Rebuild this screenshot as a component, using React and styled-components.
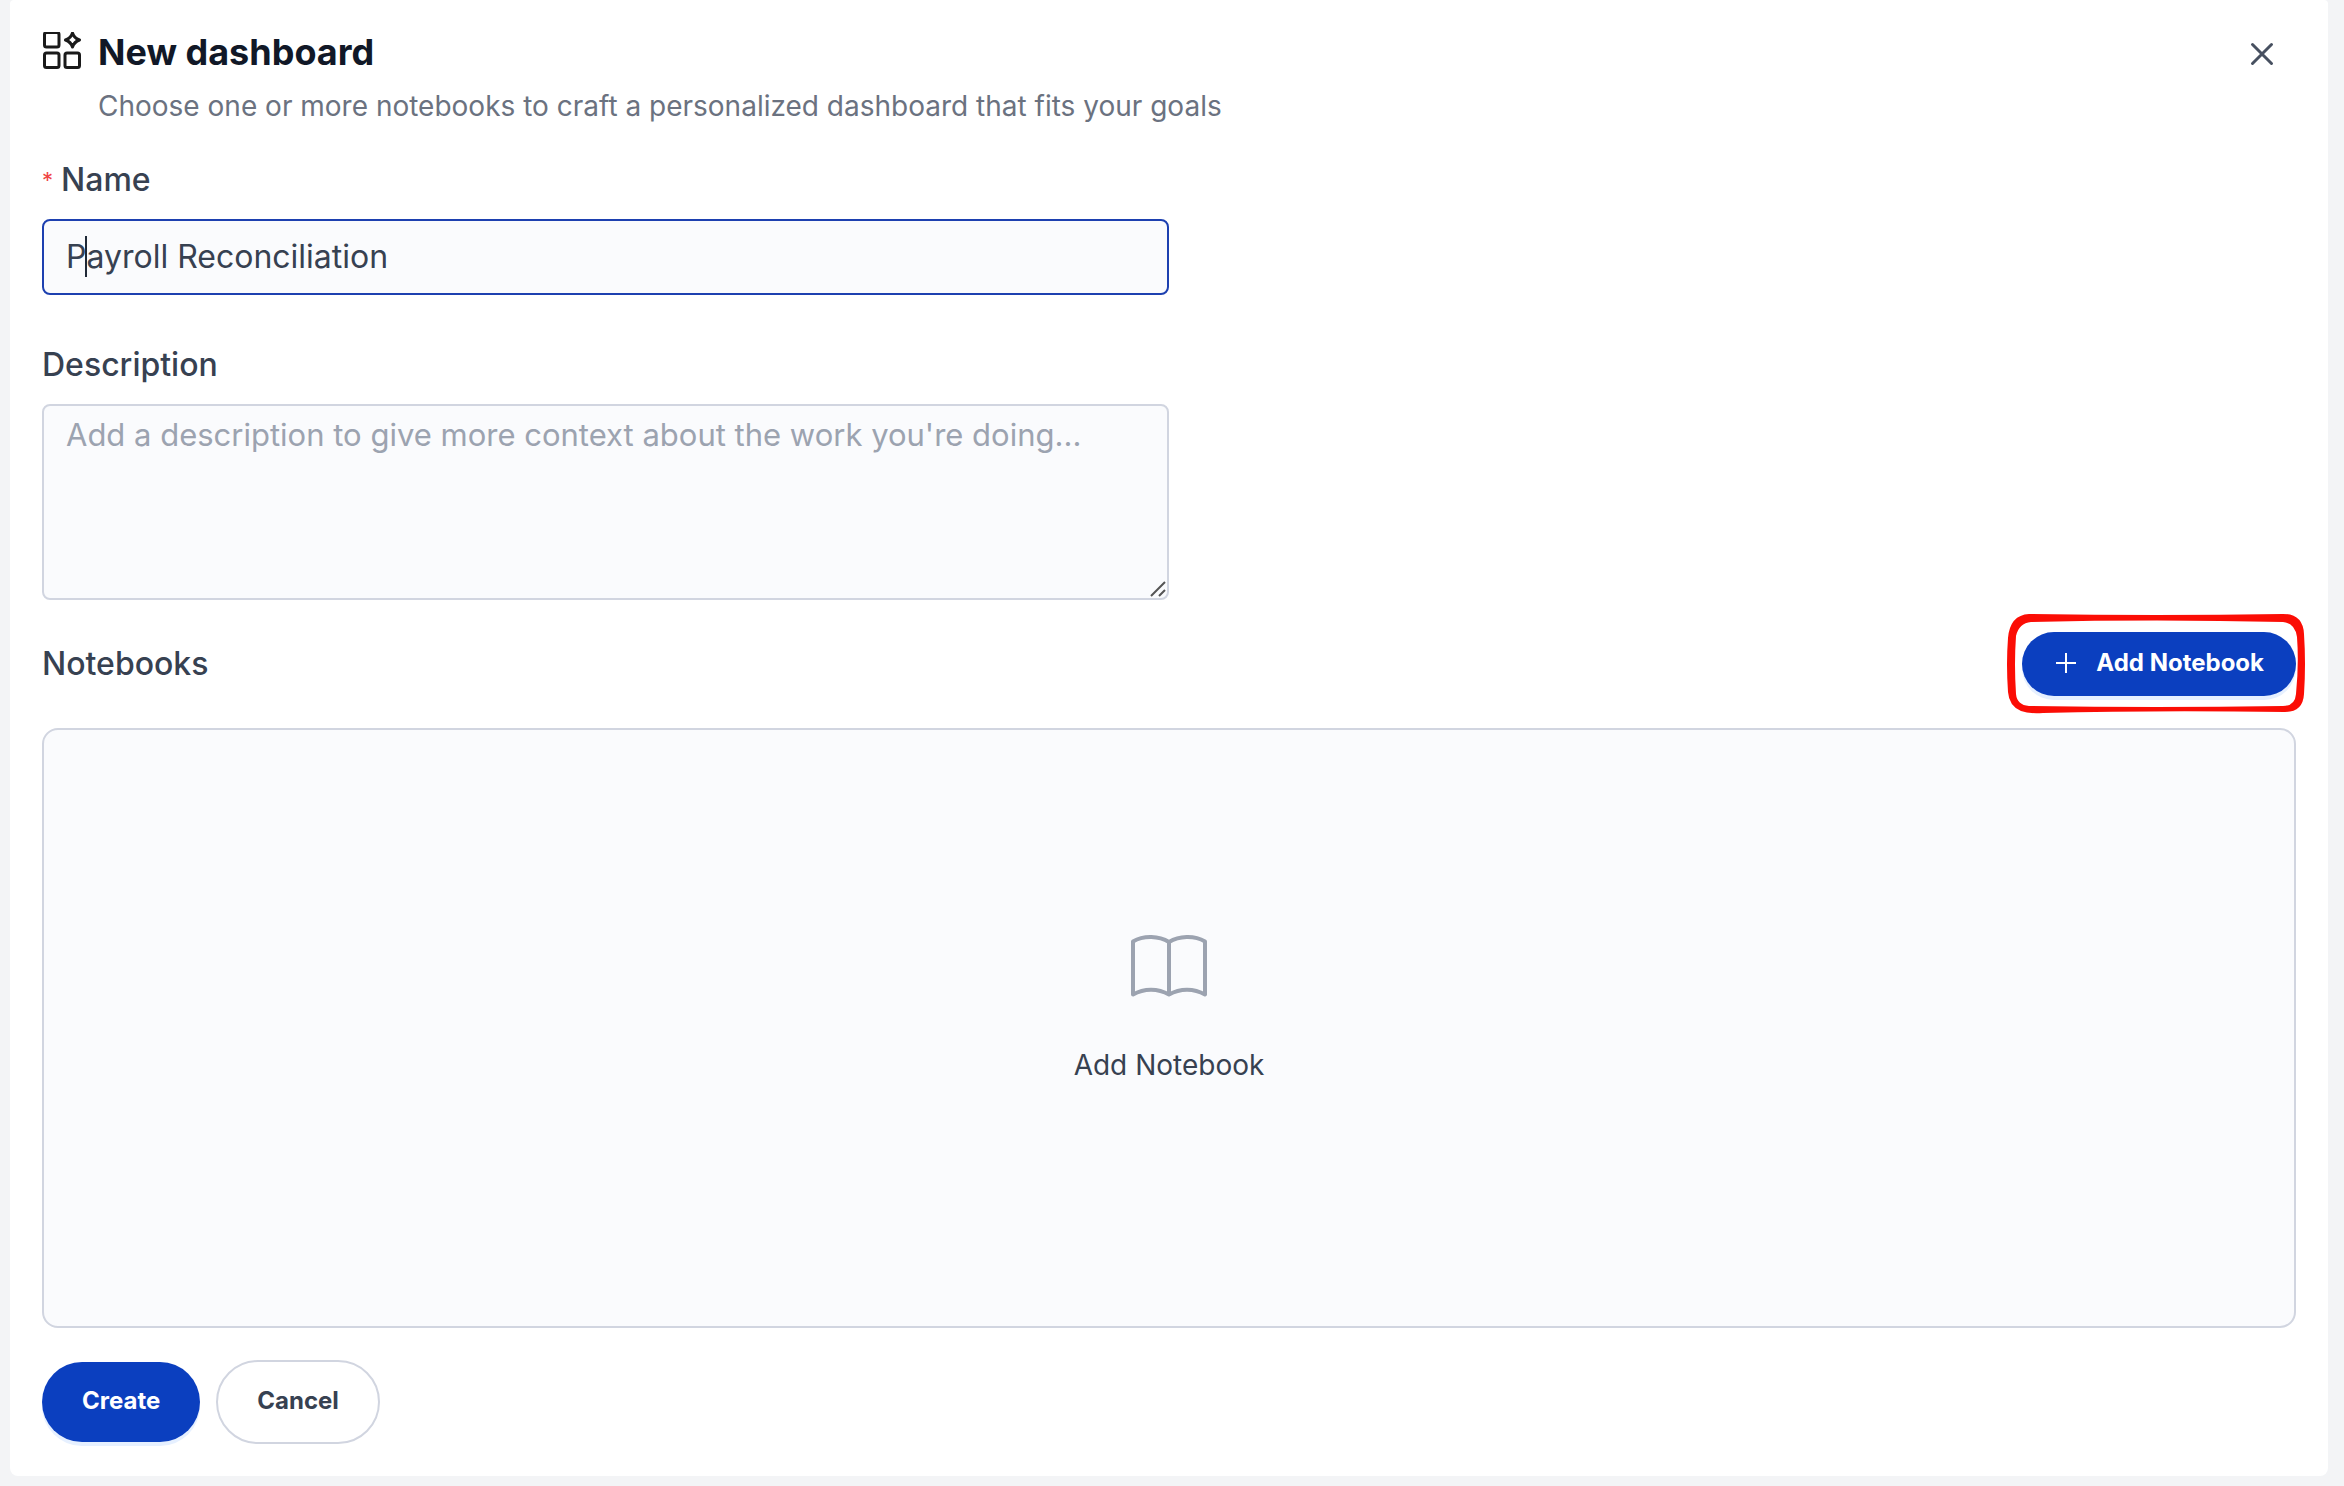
import React, { useState } from "react";
import styled, { createGlobalStyle } from "styled-components";

const GlobalStyle = createGlobalStyle`
  * {
    box-sizing: border-box;
  }
  body {
    margin: 0;
    background: #f3f4f6;
    color: #374151;
    font-family: Inter, "Liberation Sans", sans-serif;
  }
  button, input, textarea {
    font-family: inherit;
  }
`;
const Page = styled.div`
  min-height: 100vh;
  padding: 0 16px 10px 10px;
  display: flex;
`;
const Card = styled.form`
  flex: 1;
  min-width: 0;
  padding: 32px;
  background: #ffffff;
  border-radius: 4px 4px 8px 8px;
`;
const Header = styled.header`
  display: flex;
  align-items: flex-start;
  gap: 16px;
  margin-bottom: 34px;
`;
const HeaderText = styled.div`
  flex: 1;
`;
const Title = styled.h1`
  margin: 0 0 14px;
  color: #111827;
  font-size: 36px;
  font-weight: 700;
  line-height: 40px;
`;
const Subtitle = styled.p`
  margin: 0;
  color: #6b7280;
  font-size: 28px;
  line-height: 40px;
`;
const CloseButton = styled.button`
  display: flex;
  padding: 10px 22px;
  border: none;
  background: none;
  cursor: pointer;
`;
const Field = styled.div`
  width: 50%;
  margin-bottom: ${(props) => props.$space};
`;
const Label = styled.label`
  display: flex;
  gap: 8px;
  margin-bottom: 19px;
  font-size: 32px;
  font-weight: 500;
  line-height: 40px;
`;
const Required = styled.span`
  color: #ef4444;
  font-size: 22px;
  font-weight: 400;
`;
const ControlWrapper = styled.div`
  position: relative;
  display: flex;
`;
const TextInput = styled.input`
  width: 100%;
  height: 76px;
  padding: 0 22px 2px;
  border: 2px solid #1d40b0;
  border-radius: 8px;
  outline: none;
  background: #fafbfd;
  color: #374151;
  caret-color: transparent;
  font-size: 32px;
`;
const Caret = styled.span`
  position: absolute;
  left: 43px;
  top: 17px;
  width: 2px;
  height: 41px;
  background: #1f2937;
`;
const TextArea = styled.textarea`
  width: 100%;
  height: 196px;
  padding: 9px 22px;
  border: 2px solid #d1d5e0;
  border-radius: 8px;
  outline: none;
  resize: none;
  background: #fafbfd;
  color: #374151;
  font-size: 31px;
  line-height: 40px;
  &::placeholder {
    color: #9ca3b0;
    opacity: 1;
  }
`;
const ResizeGrip = styled.svg`
  position: absolute;
  right: 3px;
  bottom: 3px;
`;
const NotebooksBar = styled.div`
  display: flex;
  align-items: center;
  justify-content: space-between;
  margin-bottom: 32px;
`;
const SectionTitle = styled.h2`
  margin: 0;
  font-size: 32px;
  font-weight: 500;
  line-height: 40px;
`;
const Highlighted = styled.div`
  position: relative;
`;
const Outline = styled.svg`
  position: absolute;
  right: -9px;
  top: -18px;
  pointer-events: none;
`;
const Button = styled.button`
  display: flex;
  align-items: center;
  gap: 20px;
  height: ${(props) => (props.$small ? "64px" : "80px")};
  padding: ${(props) => (props.$small ? "0 32px 2px 34px" : "0 40px 2px")};
  border: none;
  border-radius: 42px;
  background: #0b3fbf;
  box-shadow: 0 4px 0 #e6f0ff;
  color: #ffffff;
  font-size: 24px;
  font-weight: 700;
  line-height: 32px;
  cursor: pointer;
`;
const OutlineButton = styled(Button)`
  height: 84px;
  padding: 0 39px 2px;
  border: 2px solid #d1d5e0;
  background: #ffffff;
  box-shadow: none;
  color: #374151;
`;
const EmptyPanel = styled.div`
  display: flex;
  flex-direction: column;
  align-items: center;
  justify-content: center;
  gap: 48px;
  height: 600px;
  padding-bottom: 36px;
  border: 2px solid #d1d5e0;
  border-radius: 16px;
  background: #fafbfd;
  font-size: 28px;
  line-height: 40px;
`;
const Footer = styled.footer`
  display: flex;
  align-items: center;
  gap: 16px;
  margin-top: 32px;
`;

const DashboardIcon = () => (
  <svg
    width="40"
    height="40"
    viewBox="0 1 40 40"
    fill="none"
    stroke="#1a1a1a"
    strokeWidth="3"
    strokeLinejoin="round"
  >
    <rect x="2.500" y="1.500" width="14.500" height="14.500" rx="2" />
    <rect x="2.500" y="22" width="14.500" height="14.500" rx="2" />
    <rect x="23" y="22" width="14.500" height="14.500" rx="2" />
    <path d="M30.500 2Q32 7 37.500 9Q32 11 30.500 16Q29 11 23.500 9Q29 7 30.500 2Z" />
  </svg>
);
const CloseIcon = () => (
  <svg width="24" height="24" fill="none" stroke="#475060" strokeWidth="3" strokeLinecap="round">
    <path d="M2.500 2.500L21.500 21.500M21.500 2.500L2.500 21.500" />
  </svg>
);
const PlusIcon = () => (
  <svg width="20" height="20" fill="none" stroke="#ffffff" strokeWidth="2">
    <path d="M10 0V20M0 10H20" />
  </svg>
);
const BookIcon = () => (
  <svg
    width="76"
    height="62"
    fill="none"
    stroke="#9ca3b0"
    strokeWidth="4"
    strokeLinecap="round"
    strokeLinejoin="round"
  >
    <path d="M38 7C28 1 13 0 2 6.500V59.500C13 53 27 53 38 59.500C49 53 63 53 74 59.500V6.500C63 0 48 1 38 7V59.500" />
  </svg>
);

function App() {
  const [name, setName] = useState("Payroll Reconciliation");
  const [description, setDescription] = useState("");

  return (
    <>
      <GlobalStyle />
      <Page>
        <Card onSubmit={(e) => e.preventDefault()}>
          <Header>
            <DashboardIcon />
            <HeaderText>
              <Title>New dashboard</Title>
              <Subtitle>
                Choose one or more notebooks to craft a personalized dashboard that fits your goals
              </Subtitle>
            </HeaderText>
            <CloseButton type="button" aria-label="Close">
              <CloseIcon />
            </CloseButton>
          </Header>

          <Field $space="50px">
            <Label htmlFor="name">
              <Required>*</Required>
              Name
            </Label>
            <ControlWrapper>
              <TextInput id="name" value={name} onChange={(e) => setName(e.target.value)} />
              <Caret />
            </ControlWrapper>
          </Field>

          <Field $space="32px">
            <Label htmlFor="description">Description</Label>
            <ControlWrapper>
              <TextArea
                id="description"
                value={description}
                onChange={(e) => setDescription(e.target.value)}
                placeholder="Add a description to give more context about the work you're doing..."
              />
              <ResizeGrip width="16" height="16" stroke="#555555" strokeWidth="2">
                <path d="M1 15L15 1M9 15L15 9" />
              </ResizeGrip>
            </ControlWrapper>
          </Field>

          <NotebooksBar>
            <SectionTitle>Notebooks</SectionTitle>
            <Highlighted>
              <Button type="button" $small>
                <PlusIcon />
                Add Notebook
              </Button>
              <Outline width="298" height="101" fill="#fb0d05" fillRule="evenodd">
                <path
                  d="M22 0Q150 2 276 0Q296 0 297 20Q299 50 297 80Q296 98 278 98Q150 96 36 99Q22 100 14 97Q2 92 1 78Q-1 50 1 24Q3 1 22 0Z
                     M24 8Q12 9 9 22Q7 50 9 80Q10 91 22 92Q150 94 276 92Q288 92 289 80Q292 50 290 23Q288 9 276 8Q150 5 24 8Z"
                />
              </Outline>
            </Highlighted>
          </NotebooksBar>

          <EmptyPanel>
            <BookIcon />
            Add Notebook
          </EmptyPanel>

          <Footer>
            <Button type="submit">Create</Button>
            <OutlineButton type="button">Cancel</OutlineButton>
          </Footer>
        </Card>
      </Page>
    </>
  );
}

export default App;
